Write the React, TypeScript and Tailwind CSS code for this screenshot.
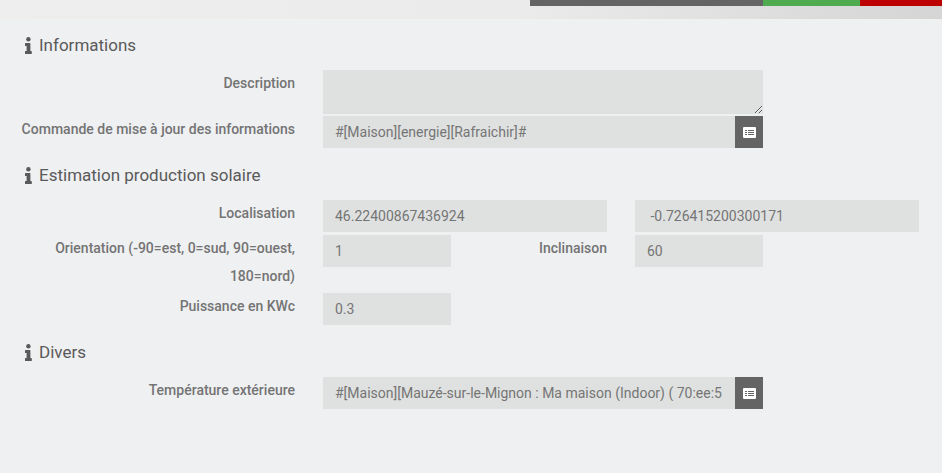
import React from 'react';

const inputClass = 'block h-8 w-full min-w-0 bg-[#dfe1e0] pr-2.5 pl-3 text-sm text-[#757575] outline-none';

const InfoIcon = () => (
  <svg className="h-[17px] w-[7px] shrink-0" viewBox="0 0 7 17" fill="currentColor" aria-hidden="true">
    <circle cx="3.4" cy="2.2" r="2.2" />
    <path d="M.5 6h4.4a.5.5 0 0 1 .5.5V14h.9a.5.5 0 0 1 .5.5v2a.5.5 0 0 1-.5.5H.5a.5.5 0 0 1-.5-.5v-2a.5.5 0 0 1 .5-.5h1.1V9H.5a.5.5 0 0 1-.5-.5v-2A.5.5 0 0 1 .5 6z" />
  </svg>
);

const ListIcon = () => (
  <svg className="h-[11px] w-[13px] shrink-0" viewBox="0 0 13 11" aria-hidden="true">
    <rect width="13" height="11" rx="1" fill="#fff" />
    <path d="M2 3.500h2M2 5.500h2M2 7.500h2M5 3.500h6M5 5.500h6M5 7.500h6" stroke="#646464" strokeWidth="1" />
  </svg>
);

interface RowProps {
  id: string;
  label: string;
  className?: string;
  children: React.ReactNode;
}

const Row: React.FC<RowProps> = ({ id, label, className = 'pb-0.5', children }) => (
  <div className={`grid grid-cols-[309fr_156fr_156fr_156fr_156fr] items-start ${className}`}>
    <Label id={id}>{label}</Label>
    {children}
  </div>
);

const Label: React.FC<{ id: string; children: React.ReactNode }> = ({ id, children }) => (
  <label htmlFor={id} className="px-3.5 text-right text-sm leading-7 font-medium text-[#747474]">
    {children}
  </label>
);

interface FieldProps {
  id: string;
  value: string;
  className?: string;
}

const Field: React.FC<FieldProps> = ({ id, value, className = '' }) => (
  <div className={`px-3.5 pt-px ${className}`}>
    <input id={id} type="text" defaultValue={value} className={inputClass} />
  </div>
);

const CommandField: React.FC<FieldProps> = ({ id, value }) => (
  <div className="col-span-3 flex px-3.5 pt-px">
    <input id={id} type="text" defaultValue={value} className={inputClass} />
    <button type="button" className="flex h-8 w-7 shrink-0 items-center justify-center bg-[#646464]">
      <ListIcon />
    </button>
  </div>
);

const Section: React.FC<{ title: string; children: React.ReactNode }> = ({ title, children }) => (
  <section>
    <h3 className="flex items-center gap-[7px] pt-3 pb-[11px] pl-[25px] text-[17px] leading-[26px] text-[#5a5a5a]">
      <InfoIcon />
      {title}
    </h3>
    {children}
  </section>
);

export default function App() {
  return (
    <div className="min-h-screen bg-[#eff0f2] font-['Roboto',sans-serif]">
      <header className="h-5 border-b border-[#f0f0ef] bg-linear-to-r from-[#eeeeee] from-0% via-[#ebebeb] via-55% to-[#d5d5d5]">
        <div className="grid h-1.5 grid-cols-[530fr_233fr_97fr_82fr]">
          <div className="col-start-2 bg-[#646464]" />
          <div className="bg-[#50aa50]" />
          <div className="bg-[#bd0000]" />
        </div>
      </header>
      <form className="pr-[9px]">
        <Section title="Informations">
          <Row id="description" label="Description" className="pb-px">
            <div className="col-span-3 px-3.5 pt-px">
              <textarea id="description" className="block h-11 w-full bg-[#dfe1e0] px-3 text-sm outline-none" />
            </div>
          </Row>
          <Row id="refresh" label="Commande de mise à jour des informations">
            <CommandField id="refresh" value="#[Maison][energie][Rafraichir]#" />
          </Row>
        </Section>
        <Section title="Estimation production solaire">
          <Row id="latitude" label="Localisation">
            <Field id="latitude" value="46.22400867436924" className="col-span-2" />
            <Field id="longitude" value=" -0.726415200300171" className="col-span-2" />
          </Row>
          <Row id="orientation" label="Orientation (-90=est, 0=sud, 90=ouest, 180=nord)">
            <Field id="orientation" value="1" />
            <Label id="inclinaison">Inclinaison</Label>
            <Field id="inclinaison" value="60" />
          </Row>
          <Row id="puissance" label="Puissance en KWc">
            <Field id="puissance" value="0.3" />
          </Row>
        </Section>
        <Section title="Divers">
          <Row id="temperature" label="Température extérieure">
            <CommandField
              id="temperature"
              value="#[Maison][Mauzé-sur-le-Mignon : Ma maison (Indoor) ( 70:ee:5"
            />
          </Row>
        </Section>
      </form>
    </div>
  );
}
